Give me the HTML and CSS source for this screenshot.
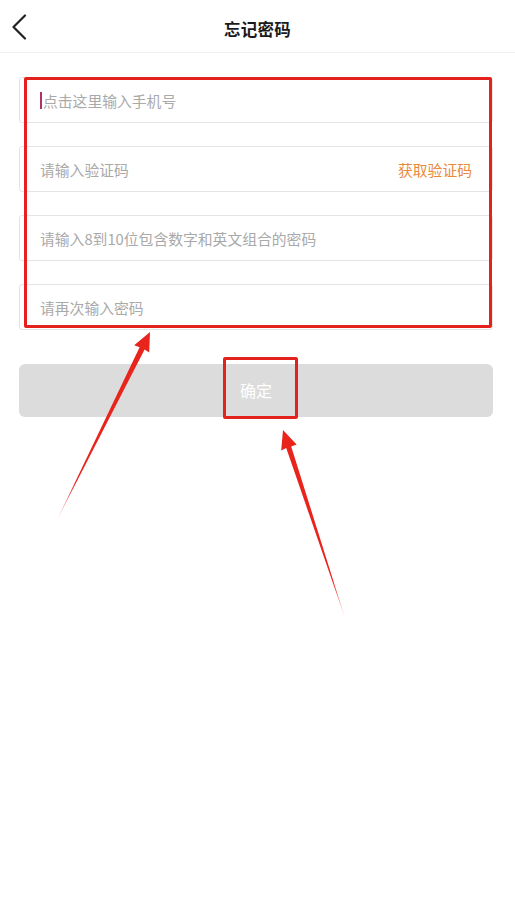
FILE: index.html
```html
<!DOCTYPE html>
<html lang="zh">
<head>
<meta charset="utf-8">
<title>忘记密码</title>
<link rel="stylesheet" href="styles.css">
</head>
<body>
<div class="page">
  <header class="topbar">
    <span class="back">
      <svg width="16" height="26" viewBox="0 0 16 26"><path d="M14 1.5 L2.5 13 L14 24.5" fill="none" stroke="#222" stroke-width="2.2" stroke-linecap="round" stroke-linejoin="round"/></svg>
    </span>
    <h1 class="title">忘记密码</h1>
  </header>

  <main class="form">
    <div class="field"><span class="cursor"></span><span class="ph">点击这里输入手机号</span></div>
    <div class="field"><span class="ph">请输入验证码</span><span class="getcode">获取验证码</span></div>
    <div class="field"><span class="ph">请输入8到10位包含数字和英文组合的密码</span></div>
    <div class="field"><span class="ph">请再次输入密码</span></div>
    <div class="btn">确定</div>
  </main>

  <div class="mark mark-fields"></div>
  <div class="mark mark-btn"></div>
  <svg class="arrows" width="515" height="901" viewBox="0 0 515 901">
    <defs>
      <linearGradient id="g1" x1="150" y1="332" x2="57" y2="520" gradientUnits="userSpaceOnUse">
        <stop offset="0" stop-color="#e8241c"/>
        <stop offset="0.8" stop-color="#e8241c"/>
        <stop offset="1" stop-color="#e8241c" stop-opacity="0.3"/>
      </linearGradient>
      <linearGradient id="g2" x1="283" y1="430" x2="345" y2="618" gradientUnits="userSpaceOnUse">
        <stop offset="0" stop-color="#e8241c"/>
        <stop offset="0.8" stop-color="#e8241c"/>
        <stop offset="1" stop-color="#e8241c" stop-opacity="0.3"/>
      </linearGradient>
    </defs>
    <polygon fill="url(#g1)" points="150,332 149.2,352.5 144.6,349.6 57,520 139.6,347.2 134.2,345.2"/>
    <polygon fill="url(#g2)" points="283,430 296.6,444.4 291.2,446.4 345,618 286.2,448 281.2,450.4"/>
  </svg>
</div>
</body>
</html>
```
FILE: styles.css
```css
* { box-sizing: border-box; }
html, body { margin: 0; padding: 0; background: #fff; }
body {
  font-family: "Noto Sans CJK SC", "Noto Sans", "Liberation Sans", sans-serif;
}
.page { position: relative; width: 515px; height: 901px; overflow: hidden; }

.topbar {
  height: 53px;
  border-bottom: 1px solid #f1f1f1;
  display: flex;
  align-items: center;
  justify-content: center;
  position: relative;
}
.back {
  position: absolute;
  left: 11px;
  top: 14px;
  width: 16px;
  height: 26px;
  display: flex;
}
.title {
  margin: 0;
  font-size: 16.5px;
  font-weight: 700;
  color: #1a1a1a;
  letter-spacing: 0.3px;
  padding-top: 5px;
}

.form {
  padding: 24px 22px 0 19px;
  display: flex;
  flex-direction: column;
  gap: 23px;
}
.field {
  height: 46px;
  border: 1px solid #e4e4e4;
  border-radius: 3px;
  display: flex;
  align-items: center;
  padding: 0 20px 0 20px;
  position: relative;
}
.ph {
  font-size: 14.8px;
  color: #a9a9a9;
  flex: 1;
}
.cursor {
  width: 2px;
  height: 17px;
  background: #b2306a;
  margin-right: 1px;
}
.getcode {
  font-size: 14.8px;
  color: #e98a3a;
}
.btn {
  margin-top: 11px;
  height: 53px;
  border-radius: 6px;
  background: #dcdcdc;
  color: #fff;
  font-size: 16px;
  display: flex;
  align-items: center;
  justify-content: center;
  padding-bottom: 2px;
}

.mark {
  position: absolute;
  border: 3px solid #e3221d;
  border-radius: 2px;
}
.mark-fields { left: 24px; top: 77px; width: 468px; height: 251px; }
.mark-btn { left: 223px; top: 357px; width: 75px; height: 62px; }
.arrows { position: absolute; left: 0; top: 0; }
```
